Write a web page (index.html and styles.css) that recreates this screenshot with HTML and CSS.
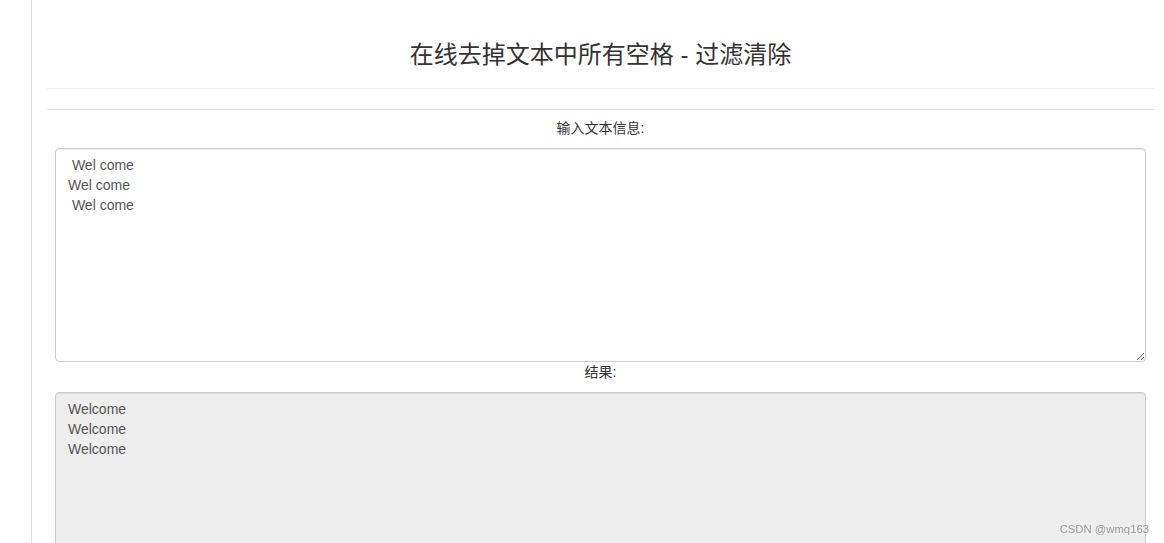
FILE: index.html
```html
<!DOCTYPE html>
<html lang="zh">
<head>
<meta charset="utf-8">
<title>在线去掉文本中所有空格 - 过滤清除</title>
<link rel="stylesheet" href="styles.css">
</head>
<body>
<div class="page">
  <aside class="sidebar"></aside>
  <main class="main">
    <header class="header">
      <h3 class="title">在线去掉文本中所有空格 - 过滤清除</h3>
    </header>
    <div class="divider"></div>
    <div class="label">输入文本信息:</div>
    <textarea class="box input"> Wel come
Wel come
 Wel come</textarea>
    <div class="label label-result">结果:</div>
    <textarea class="box output" readonly>Welcome
Welcome
Welcome</textarea>
  </main>
</div>
<div class="watermark">CSDN @wmq163</div>
</body>
</html>
```
FILE: styles.css
```css
html, body {
  margin: 0;
  padding: 0;
  background: #fff;
  font-family: "Liberation Sans", "Noto Sans CJK SC", Arial, sans-serif;
  color: #333;
  overflow: hidden;
}
.page {
  display: flex;
  height: 543px;
  overflow: hidden;
}
.sidebar {
  width: 31px;
  flex: none;
  border-right: 1px solid #ddd;
}
.main {
  flex: 1;
  margin: 0 10px 0 15px;
  display: flex;
  flex-direction: column;
}
.header {
  height: 89px;
  flex: none;
  box-sizing: border-box;
  padding-top: 41px;
  border-bottom: 1px solid #eee;
}
.title {
  margin: 0;
  text-align: center;
  font-weight: normal;
  font-size: 24px;
  line-height: 28px;
  color: #333;
  font-family: "Liberation Sans", "Noto Sans CJK SC", sans-serif;
}
.divider {
  flex: none;
  margin-top: 20px;
  border-top: 1px solid #ddd;
}
.label {
  flex: none;
  text-align: center;
  font-size: 14px;
  line-height: 20px;
  margin-top: 8px;
  margin-bottom: 10px;
}
.label-result {
  margin-top: 0;
}
.box {
  display: block;
  flex: none;
  margin: 0 8px;
  box-sizing: border-box;
  border: 1px solid #ccc;
  border-radius: 4px;
  padding: 6px 12px;
  font-family: "Liberation Sans", "Noto Sans CJK SC", Arial, sans-serif;
  font-size: 14px;
  line-height: 20px;
  color: #555;
  box-shadow: inset 0 1px 1px rgba(0,0,0,0.075);
  outline: none;
}
.input {
  height: 214px;
  background: #fff;
  resize: vertical;
}
.output {
  height: 200px;
  background: #eee;
  resize: none;
}
.watermark {
  position: fixed;
  right: 15px;
  bottom: 8px;
  font-family: "Liberation Sans", sans-serif;
  font-size: 11.3px;
  color: #999;
}
```
